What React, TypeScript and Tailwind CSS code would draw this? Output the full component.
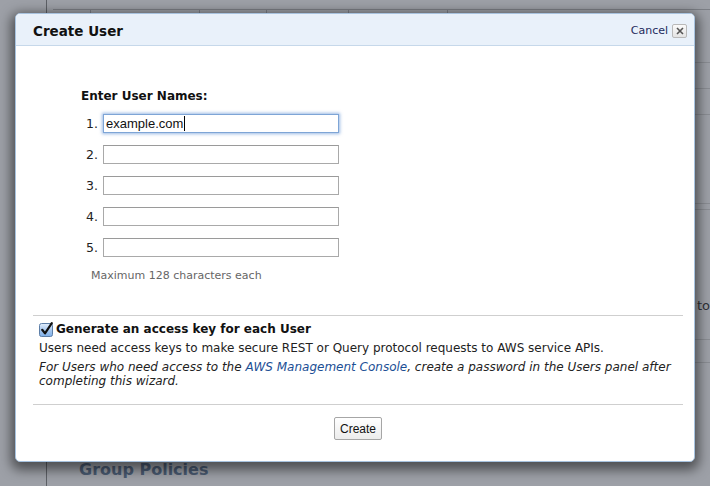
import React from 'react';

const verdana = 'font-["DejaVu_Sans",Verdana,sans-serif]';
const arial = 'font-["Liberation_Sans",Arial,sans-serif]';

function CheckIcon() {
  return (
    <svg width="15" height="15" viewBox="0 0 15 15" className="shrink-0">
      <defs>
        <linearGradient id="cb" x1="0" y1="0" x2="0" y2="1">
          <stop offset="0" stopColor="#e3eefb" />
          <stop offset="0.5" stopColor="#a9c9ef" />
          <stop offset="1" stopColor="#7fb0ea" />
        </linearGradient>
      </defs>
      <rect x="0.5" y="1.5" width="13" height="13" rx="2" fill="url(#cb)" stroke="#5d7fa8" />
      <path d="M3.2 7.8 L6 11.4 L12.8 1.2" fill="none" stroke="#111" strokeWidth="2.2" strokeLinecap="round" strokeLinejoin="round" />
    </svg>
  );
}

function CloseBox() {
  return (
    <span className="flex h-[14px] w-[15px] items-center justify-center rounded-[2px] border border-[#b9b9b9] bg-gradient-to-b from-[#fafafa] to-[#e4e4e4]">
      <svg width="8" height="8" viewBox="0 0 8 8">
        <path d="M1 1 L7 7 M7 1 L1 7" stroke="#555" strokeWidth="1.6" />
      </svg>
    </span>
  );
}

const rows = ['1.', '2.', '3.', '4.', '5.'];

export default function App() {
  return (
    <div className={`relative flex h-[486px] w-[710px] overflow-hidden bg-[#9da0a7] ${verdana}`}>
      {/* dimmed page behind the dialog */}
      <aside className="h-full w-[47px] shrink-0 border-r border-[#5d6066]" />
      <main className="flex flex-1 flex-col pl-[6px]">
        <div className="h-[10px] shrink-0 border-b border-[#7c7f86]" />
        <div className="flex h-[4px] shrink-0">
          <div className="w-[37px]" />
          <div className="w-[109px] border-l border-[#7c7f86]" />
          <div className="w-[67px] border-l border-[#7c7f86]" />
          <div className="w-[82px] border-l border-[#7c7f86]" />
          <div className="w-[99px] border-l border-[#7c7f86]" />
          <div className="flex-1 border-l border-[#7c7f86]" />
        </div>
        <div className="h-[49px] shrink-0 border-b border-[#8a8d93]" />
        <div className="h-[26px] shrink-0 border-b border-[#8a8d93]" />
        <div className="h-[26px] shrink-0 border-b border-[#8a8d93]" />
        <div className="h-[89px] shrink-0 border-b border-[#8a8d93]" />
        <div className="h-[6px] shrink-0 border-b border-[#8a8d93]" />
        <div className="flex h-[106px] shrink-0 items-end justify-end pb-[2px]">
          <span className="text-[13px] leading-[16px] text-[#2f3237]">to</span>
        </div>
        <div className="h-[24px] shrink-0 border-b border-[#8a8d93]" />
        <div className="h-[23px] shrink-0 border-b border-[#8a8d93]" />
        <div className="mt-auto pb-[6px] pl-[26px]">
          <h2 className="text-[16px] font-bold leading-[20px] text-[#4a5b72]">Group Policies</h2>
        </div>
      </main>

      {/* dialog */}
      <div className="absolute left-[15px] top-[13px] flex h-[449px] w-[680px] flex-col overflow-hidden rounded-[5px] border border-[#a8c3df] bg-white shadow-[0_4px_12px_4px_rgba(0,0,0,0.5)]">
        <div className="flex h-[32px] shrink-0 items-center justify-between border-b border-[#c6d8ea] bg-[#e9f1fa] pl-[17px] pr-[7px] pt-[2px]">
          <h1 className="text-[13.5px] font-bold leading-[18px] text-[#111]">Create User</h1>
          <div className="flex items-center gap-[4px]">
            <span className="text-[11px] leading-[14px] text-[#1d2b5c]">Cancel</span>
            <CloseBox />
          </div>
        </div>

        <div className="ml-[65px] mt-[43px] flex flex-col">
          <p className="text-[12px] font-bold leading-[15px] text-[#111]">Enter User Names:</p>
          <div className="mt-[10px] flex flex-col gap-[12px]">
            {rows.map((n, i) => (
              <div key={n} className="flex h-[19px] items-center">
                <span className="w-[22px] pr-[5px] text-right text-[12.5px] leading-[15px] text-[#222]">{n}</span>
                {i === 0 ? (
                  <div className={`flex h-[19px] w-[236px] items-center border border-[#7ea5d6] bg-white pl-[2px] shadow-[0_0_3px_1px_rgba(90,140,210,0.6)] ${arial}`}>
                    <span className="text-[13px] leading-[15px] text-[#111]">example.com</span>
                    <span className="ml-[1px] h-[15px] w-[1px] bg-black" />
                  </div>
                ) : (
                  <input
                    type="text"
                    readOnly
                    className="h-[19px] w-[236px] border border-[#a9a9a9] border-t-[#9a9a9a] bg-white outline-none"
                  />
                )}
              </div>
            ))}
          </div>
          <p className="ml-[10px] mt-[12px] text-[11px] leading-[14px] text-[#666]">Maximum 128 characters each</p>
        </div>

        <div className="ml-[17px] mr-[11px] mt-[32px] flex flex-col">
          <div className="border-t border-[#cfcfcf] pl-[6px] pt-[5px]">
            <label className="flex h-[16px] items-center gap-[2px]">
              <CheckIcon />
              <span className="text-[12px] font-bold leading-[16px] text-[#111]">Generate an access key for each User</span>
            </label>
            <p className="mt-[3px] text-[12px] leading-[16px] text-[#222]">
              Users need access keys to make secure REST or Query protocol requests to AWS service APIs.
            </p>
            <p className="mt-[4px] whitespace-nowrap text-[12px] italic leading-[14px] text-[#222]">
              For Users who need access to the <a className="text-[#1c4f95]">AWS Management Console</a>, create a password in the Users panel after
              <br />
              completing this wizard.
            </p>
          </div>
          <div className="mt-[16px] flex justify-center border-t border-[#cfcfcf] pt-[12px]">
            <button className={`h-[23px] rounded-[2px] border border-[#a6a6a6] bg-gradient-to-b from-white to-[#ececec] px-[5px] text-[12px] leading-[14px] text-[#111] ${arial}`}>
              Create
            </button>
          </div>
        </div>
      </div>
    </div>
  );
}
